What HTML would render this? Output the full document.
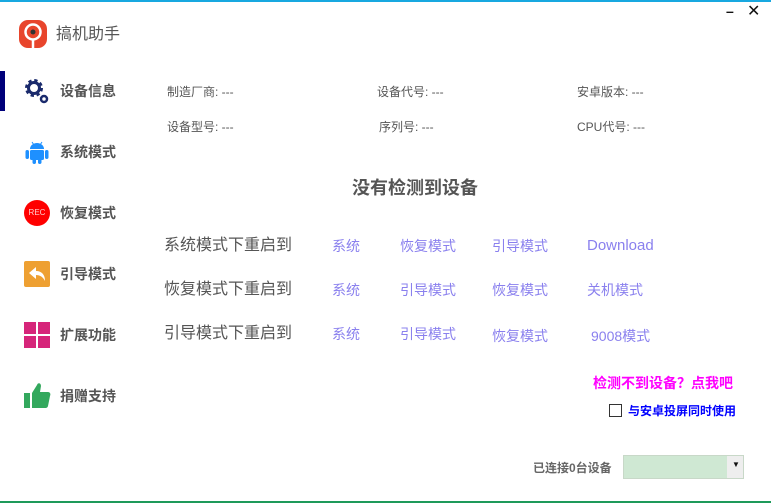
<!DOCTYPE html>
<html><head><meta charset="utf-8">
<style>
*{margin:0;padding:0;box-sizing:border-box}
body{width:771px;height:503px;background:#fff;position:relative;overflow:hidden;font-family:"Liberation Sans","Noto Sans CJK SC",sans-serif;color:#555}
.a{position:absolute;white-space:nowrap;line-height:1.2}
.t{margin-top:2px}
.nav{font-size:14px;font-weight:bold;color:#555;left:60px}
.info{font-size:12px;color:#555}
.lbl{font-size:16px;color:#555;left:164px}
.lk{font-size:14px;color:#8a80ee}
</style></head><body>
<div class="a" style="left:0;top:0;width:771px;height:2px;background:#18a8e0"></div>
<div class="a" style="left:0;top:501px;width:771px;height:2px;background:#1e9a5a"></div>
<div class="a" style="left:726px;top:3px;font-size:14px;font-weight:bold;color:#111">–</div>
<div class="a" style="left:747px;top:2px;font-size:16px;color:#111">✕</div>

<svg class="a" style="left:18px;top:19px" width="30" height="30" viewBox="0 0 30 30">
<rect x="1" y="1" width="28" height="28" rx="9" fill="#e8452c"/>
<circle cx="15" cy="13" r="7.5" fill="none" stroke="#fff" stroke-width="2.5"/>
<line x1="15" y1="20" x2="15" y2="29" stroke="#fff" stroke-width="2.5"/>
<circle cx="15" cy="13" r="4" fill="#e8452c"/><circle cx="15" cy="13" r="2.5" fill="#333"/></svg>
<div class="a t" style="left:56px;top:23px;font-size:16px;color:#555">搞机助手</div>

<div class="a" style="left:0;top:71px;width:5px;height:40px;background:#00007a"></div>
<svg class="a" style="left:24px;top:78px" width="26" height="26" viewBox="0 0 26 26">
<circle cx="10" cy="10" r="7" fill="none" stroke="#1a2a6c" stroke-width="4" stroke-dasharray="3 2.5"/>
<circle cx="10" cy="10" r="5.5" fill="none" stroke="#1a2a6c" stroke-width="3"/>
<circle cx="20" cy="21" r="3" fill="none" stroke="#1a2a6c" stroke-width="2.5"/></svg>
<div class="a nav t" style="top:81px">设备信息</div>

<svg class="a" style="left:24px;top:139px" width="26" height="26" viewBox="0 0 26 26">
<path d="M6 10 A7 6 0 0 1 20 10 Z" fill="#1e90ff"/>
<rect x="6" y="11" width="14" height="10" rx="1.5" fill="#1e90ff"/>
<rect x="1.5" y="11" width="3.5" height="9" rx="1.7" fill="#1e90ff"/><rect x="21" y="11" width="3.5" height="9" rx="1.7" fill="#1e90ff"/>
<rect x="8.5" y="19" width="3.5" height="6" rx="1.7" fill="#1e90ff"/><rect x="14" y="19" width="3.5" height="6" rx="1.7" fill="#1e90ff"/>
<line x1="8" y1="3" x2="10" y2="6" stroke="#1e90ff"/><line x1="18" y1="3" x2="16" y2="6" stroke="#1e90ff"/></svg>
<div class="a nav t" style="top:142px">系统模式</div>

<div class="a" style="left:24px;top:200px;width:26px;height:26px;border-radius:50%;background:#f00;color:#fcc;font-size:8px;line-height:26px;text-align:center">REC</div>
<div class="a nav t" style="top:203px">恢复模式</div>

<svg class="a" style="left:24px;top:261px" width="26" height="26" viewBox="0 0 26 26">
<rect width="26" height="26" rx="2" fill="#eea032"/>
<path d="M5 12 L12 6 L12 10 C18 10 21 14 21 20 C19 16 16 14 12 14 L12 18 Z" fill="#fff"/></svg>
<div class="a nav t" style="top:264px">引导模式</div>

<svg class="a" style="left:24px;top:322px" width="26" height="26" viewBox="0 0 26 26" fill="#d6257a">
<rect x="0" y="0" width="12" height="12"/><rect x="14" y="0" width="12" height="12"/><rect x="0" y="14" width="12" height="12"/><rect x="14" y="14" width="12" height="12"/></svg>
<div class="a nav t" style="top:325px">扩展功能</div>

<svg class="a" style="left:24px;top:382px" width="27" height="27" viewBox="0 0 27 27" fill="#33a85d">
<rect x="0" y="11" width="6" height="15"/>
<path d="M8 11 L13 3 C14 0 17 1 17 4 L16 10 L24 10 C26 10 27 12 26 14 L24 24 C23.5 26 22 26 21 26 L8 26 Z"/></svg>
<div class="a nav t" style="top:386px">捐赠支持</div>

<div class="a info t" style="left:167px;top:83px">制造厂商: ---</div>
<div class="a info t" style="left:377px;top:83px">设备代号: ---</div>
<div class="a info t" style="left:577px;top:83px">安卓版本: ---</div>
<div class="a info t" style="left:167px;top:118px">设备型号: ---</div>
<div class="a info t" style="left:379px;top:118px">序列号: ---</div>
<div class="a info t" style="left:577px;top:118px">CPU代号: ---</div>

<div class="a t" style="left:352px;top:176px;font-size:18px;font-weight:bold;color:#555">没有检测到设备</div>

<div class="a lbl t" style="top:234px">系统模式下重启到</div>
<div class="a lk t" style="left:332px;top:236px">系统</div>
<div class="a lk t" style="left:400px;top:236px">恢复模式</div>
<div class="a lk t" style="left:492px;top:236px">引导模式</div>
<div class="a lk t" style="left:587px;top:235px;font-size:15px">Download</div>

<div class="a lbl t" style="top:278px">恢复模式下重启到</div>
<div class="a lk t" style="left:332px;top:280px">系统</div>
<div class="a lk t" style="left:400px;top:280px">引导模式</div>
<div class="a lk t" style="left:492px;top:280px">恢复模式</div>
<div class="a lk t" style="left:587px;top:280px">关机模式</div>

<div class="a lbl t" style="top:322px">引导模式下重启到</div>
<div class="a lk t" style="left:332px;top:324px">系统</div>
<div class="a lk t" style="left:400px;top:324px">引导模式</div>
<div class="a lk t" style="left:492px;top:326px">恢复模式</div>
<div class="a lk t" style="left:591px;top:326px">9008模式</div>

<div class="a t" style="left:593px;top:373px;font-size:14px;font-weight:bold;color:#f0f">检测不到设备？点我吧</div>
<div class="a" style="left:609px;top:404px;width:13px;height:13px;border:1px solid #333"></div>
<div class="a t" style="left:628px;top:402px;font-size:12px;font-weight:bold;color:#00f">与安卓投屏同时使用</div>

<div class="a t" style="left:533px;top:459px;font-size:12px;font-weight:bold;color:#666">已连接0台设备</div>
<div class="a" style="left:623px;top:455px;width:121px;height:24px;background:#cfe8d3;border:1px solid #c8d8c8"></div>
<div class="a" style="left:727px;top:456px;width:16px;height:22px;background:#eee"></div>
<div class="a" style="left:732px;top:460px;font-size:8px;color:#111">▼</div>
</body></html>
